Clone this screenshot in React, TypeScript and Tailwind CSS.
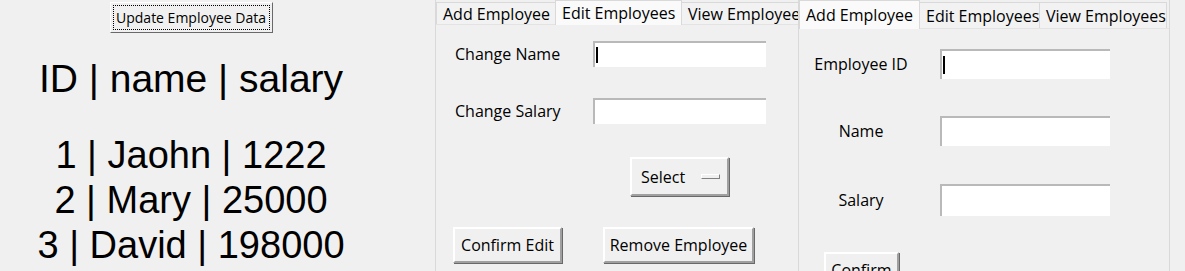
const ui = '"Open Sans", "Noto Sans", sans-serif';

function RaisedButton({ label, className = '' }: { label: string; className?: string }) {
  return (
    <div
      className={`flex items-center justify-center bg-[#f0f0f0] border-2 border-t-white border-l-white border-b-[#a0a0a0] border-r-[#a0a0a0] shadow-[1px_1px_0_#696969] text-[16px] text-black ${className}`}
      style={{ fontFamily: ui }}
    >
      {label}
    </div>
  );
}

function Entry({ className = '', cursor = false }: { className?: string; cursor?: boolean }) {
  return (
    <div className={`bg-white border-t-2 border-l-2 border-t-[#b9b9b9] border-l-[#b9b9b9] flex items-center ${className}`}>
      {cursor && <div className="ml-[1px] w-[2px] h-[65%] bg-black" />}
    </div>
  );
}

function Tabs({ tabs, active, tall }: { tabs: { label: string; w: number }[]; active: number; tall: number }) {
  return (
    <div className="flex items-end border-b border-[#e3e3e3]" style={{ height: tall }}>
      {tabs.map((t, i) => (
        <div
          key={t.label}
          className={`shrink-0 flex items-center px-[6px] whitespace-nowrap text-[16px] text-black border border-b-0 border-[#d9d9d9] -ml-px first:ml-0
            ${i === active ? 'bg-[#fafafa] h-[calc(100%+1px)] -mb-px z-10' : 'bg-[#f2f2f2] h-[calc(100%-2px)]'}`}
          style={{ width: t.w, fontFamily: ui }}
        >
          {t.label}
        </div>
      ))}
    </div>
  );
}

export default function App() {
  return (
    <div className="w-[1185px] h-[271px] bg-[#f0f0f0] flex overflow-hidden">
      {/* left: employee list */}
      <div className="w-[435px] shrink-0">
        <div className="w-[382px] flex flex-col items-center">
          <div
            className="mt-[2px] w-[163px] h-[31px] p-[2px] bg-[#f0f0f0] border border-t-white border-l-white border-b-[#696969] border-r-[#696969] text-[14px]"
            style={{ fontFamily: ui }}
          >
            <div className="h-full border border-dotted border-black flex items-center justify-center">
              Update Employee Data
            </div>
          </div>
          <div
            className="mt-[23px] text-[39px] leading-[45px] text-black"
            style={{ fontFamily: '"Liberation Sans", Arial, sans-serif' }}
          >
            ID | name | salary
          </div>
          <div
            className="mt-[32px] flex flex-col items-center text-[38px] leading-[45px] text-black"
            style={{ fontFamily: '"Liberation Sans", Arial, sans-serif' }}
          >
            <span>1 | Jaohn | 1222</span>
            <span>2 | Mary | 25000</span>
            <span>3 | David | 198000</span>
          </div>
        </div>
      </div>

      {/* middle: edit employees */}
      <div className="w-[364px] shrink-0 border-l border-r border-[#d9d9d9] overflow-hidden">
        <Tabs
          tall={25}
          active={1}
          tabs={[
            { label: 'Add Employee', w: 120 },
            { label: 'Edit Employees', w: 127 },
            { label: 'View Employee', w: 130 },
          ]}
        />
        <div className="flex items-center mt-[16px] h-[26px]" style={{ fontFamily: ui }}>
          <span className="w-[157px] pl-[19px] text-[16px]">Change Name</span>
          <Entry className="w-[173px] h-[26px]" cursor />
        </div>
        <div className="flex items-center mt-[31px] h-[26px]" style={{ fontFamily: ui }}>
          <span className="w-[157px] pl-[19px] text-[16px]">Change Salary</span>
          <Entry className="w-[173px] h-[26px]" />
        </div>
        <div className="mt-[33px] ml-[194px] w-[99px] h-[39px] flex items-center bg-[#f0f0f0] border-2 border-t-white border-l-white border-b-[#a0a0a0] border-r-[#a0a0a0] shadow-[1px_1px_0_#696969]">
          <span className="ml-[9px] text-[16px]" style={{ fontFamily: ui }}>Select</span>
          <span className="ml-[16px] w-[19px] h-[5px] border border-t-white border-l-white border-b-[#808080] border-r-[#808080] bg-[#f0f0f0]" />
        </div>
        <div className="mt-[31px] flex">
          <RaisedButton label="Confirm Edit" className="ml-[17px] w-[109px] h-[36px]" />
          <RaisedButton label="Remove Employee" className="ml-[41px] w-[151px] h-[36px]" />
        </div>
      </div>

      {/* right: add employee */}
      <div className="w-[371px] shrink-0 border-r border-[#d9d9d9] overflow-hidden">
        <Tabs
          tall={29}
          active={0}
          tabs={[
            { label: 'Add Employee', w: 121 },
            { label: 'Edit Employees', w: 121 },
            { label: 'View Employees', w: 128 },
          ]}
        />
        <div className="flex items-center mt-[20px]" style={{ fontFamily: ui }}>
          <span className="w-[124px] text-center text-[16px]">Employee ID</span>
          <Entry className="ml-[17px] w-[170px] h-[30px]" cursor />
        </div>
        <div className="flex items-center mt-[37px]" style={{ fontFamily: ui }}>
          <span className="w-[124px] text-center text-[16px]">Name</span>
          <Entry className="ml-[17px] w-[170px] h-[30px]" />
        </div>
        <div className="flex items-center mt-[38px]" style={{ fontFamily: ui }}>
          <span className="w-[124px] text-center text-[16px]">Salary</span>
          <Entry className="ml-[17px] w-[170px] h-[32px]" />
        </div>
        <RaisedButton label="Confirm" className="mt-[36px] ml-[25px] w-[75px] h-[36px] items-start pt-[4px]" />
      </div>
    </div>
  );
}
